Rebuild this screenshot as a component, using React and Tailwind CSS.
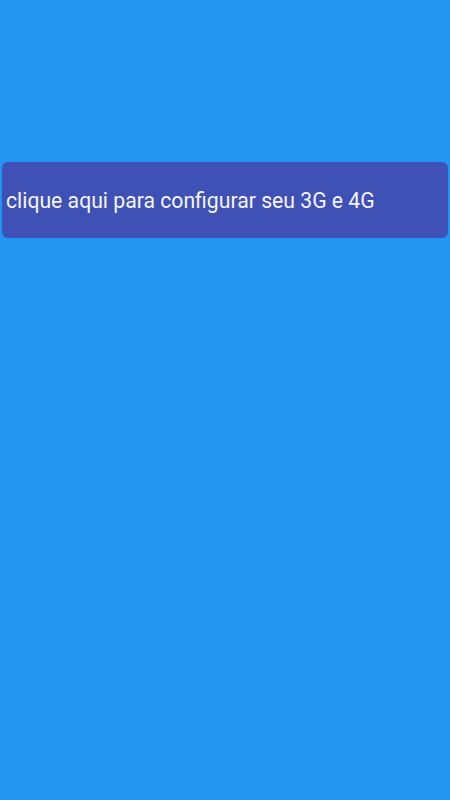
export default function App() {
  return (
    <div className="min-h-screen w-full bg-[#2196f3] px-[2px] pt-[162px] font-['Roboto',sans-serif]">
      <button className="flex h-[76px] w-full items-center rounded-md bg-[#3f51b5] pl-1 pt-[2px] text-left text-[21.2px] text-[#f5f5ff]">
        clique aqui para configurar seu 3G e 4G
      </button>
    </div>
  );
}
